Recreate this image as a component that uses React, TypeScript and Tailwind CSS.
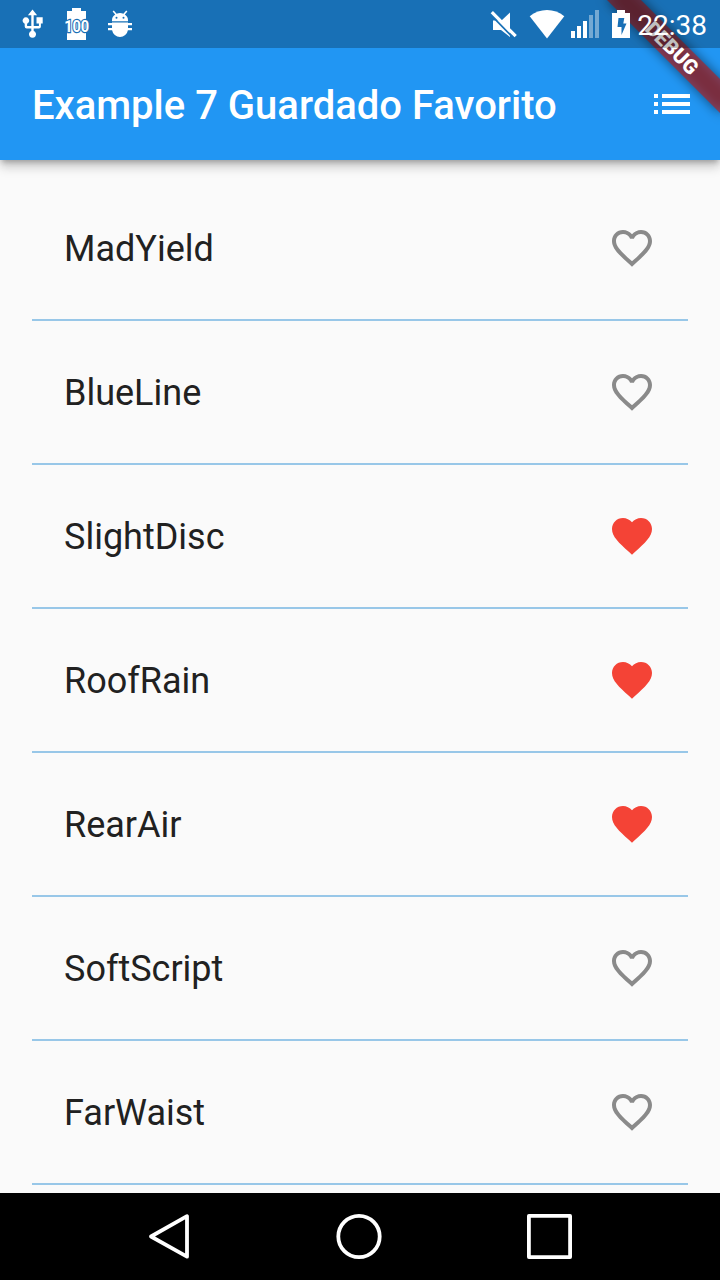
const HEART =
  'M12 21.35l-1.45-1.32C5.4 15.36 2 12.28 2 8.5 2 5.42 4.42 3 7.5 3c1.74 0 3.41.81 4.5 2.09C13.09 3.81 14.76 3 16.5 3 19.58 3 22 5.42 22 8.5c0 3.78-3.4 6.86-8.55 11.54L12 21.35z';
const HEART_OUTLINE =
  'M16.5 3c-1.74 0-3.41.81-4.5 2.09C10.91 3.81 9.24 3 7.5 3 4.42 3 2 5.42 2 8.5c0 3.78 3.4 6.86 8.55 11.54L12 21.35l1.45-1.32C18.6 15.36 22 12.28 22 8.5 22 5.42 19.58 3 16.5 3zm-4.4 15.55l-.1.1-.1-.1C7.14 14.24 4 11.39 4 8.5 4 6.5 5.5 5 7.5 5c1.54 0 3.04.99 3.57 2.36h1.87C13.46 5.99 14.96 5 16.5 5c2 0 3.5 1.5 3.5 3.5 0 2.89-3.14 5.74-7.9 10.05z';

interface Entry {
  name: string;
  saved: boolean;
}

const ENTRIES: Entry[] = [
  { name: 'MadYield', saved: false },
  { name: 'BlueLine', saved: false },
  { name: 'SlightDisc', saved: true },
  { name: 'RoofRain', saved: true },
  { name: 'RearAir', saved: true },
  { name: 'SoftScript', saved: false },
  { name: 'FarWaist', saved: false },
];

function UsbIcon() {
  return (
    <svg className="h-[30px] w-[24px]" viewBox="21 9 24 30" fill="#fff">
      <path d="M32.5 9.5l4.600 5.700h-3.400V26h5.200v-2.600h-2.400v-6.100h6.200v6.100h-1.800v3.200a2 2 0 0 1-2 2h-5.200V31a3.500 3.500 0 1 1-2.400 0v-2.400h-4.600a2 2 0 0 1-2-2v-2.900a3.300 3.300 0 1 1 2.400 0V26h4.200V15.200h-3.400z" />
    </svg>
  );
}

function BatteryLevelIcon() {
  return (
    <svg className="h-[34px] w-[36px] overflow-visible" viewBox="59 7 36 34">
      <path d="M72 8h9v3h5v29H67V11h5z" fill="#fff" />
      <text
        x="76.7"
        y="32.4"
        textAnchor="middle"
        textLength="25"
        lengthAdjust="spacingAndGlyphs"
        fontFamily="Roboto, sans-serif"
        fontWeight="700"
        fontSize="17"
        fill="#fff"
        stroke="#1970b6"
        strokeWidth="2.4"
        paintOrder="stroke"
      >
        100
      </text>
    </svg>
  );
}

function BugIcon() {
  return (
    <svg className="h-[30px] w-[26px]" viewBox="107 9 26 30" fill="#fff">
      <path d="M112 21.200v-1a8 7 0 0 1 3.200-5.700l-2.600-3 1.200-1 2.800 3.300a9 9 0 0 1 6.800 0l2.800-3.300 1.200 1-2.600 3a8 7 0 0 1 3.200 5.700v1z" />
      <path d="M108 23h4v-.6h16v.6h4v2.200h-4v2.800h4v2.200h-4.100a8 8 0 0 1-15.800 0H108V28h4v-2.800h-4z" />
      <circle cx="116.500" cy="17.700" r="1" fill="#1970b6" />
      <circle cx="123.500" cy="17.700" r="1" fill="#1970b6" />
    </svg>
  );
}

function MutedIcon() {
  return (
    <svg className="h-[30px] w-[28px]" viewBox="490 8 28 30">
      <path d="M493 19.500h8.500l8.500-8v24.500l-9-7h-8z" fill="#fff" />
      <path d="M490 13L513.500 37" stroke="#1970b6" strokeWidth="1.8" />
      <path d="M491.800 11.200L515.700 35.200" stroke="#fff" strokeWidth="3.2" />
    </svg>
  );
}

function WifiIcon() {
  return (
    <svg className="h-[30px] w-[36px]" viewBox="529 9 36 30">
      <path d="M529.700 16.200C539.500 8 554.500 8 564.300 16.200L547 38.500z" fill="#fff" />
    </svg>
  );
}

function SignalIcon() {
  return (
    <svg className="h-[30px] w-[30px]" viewBox="570 9 30 30" fill="#fff">
      <path d="M571 31h4v7h-4zM577 26h4v12h-4zM583 21h4v17h-4z" />
      <path d="M589 15h4v23h-4zM595 10h4v28h-4z" opacity=".4" />
    </svg>
  );
}

function ChargingIcon() {
  return (
    <svg className="h-[30px] w-[20px]" viewBox="611 9 20 30">
      <path d="M617 10h8v3h5v25h-18V13h5z" fill="#fff" />
      <path d="M618.500 18h5.800l-1 5.500h3.200l-5 11.500v-8h-4z" fill="#1970b6" />
    </svg>
  );
}

function DebugBanner() {
  return (
    <>
      <div className="absolute top-9 left-[592px] h-6 w-40 rotate-45 bg-black/50 blur-[6px]" />
      <div className="absolute top-9 left-[592px] flex h-6 w-40 rotate-45 items-center justify-center bg-[#b71c1c]/63 font-black text-[20.4px] leading-none text-white">
        DEBUG
      </div>
    </>
  );
}

function StatusBar() {
  return (
    <div className="absolute inset-x-0 top-0 z-20 flex h-12 items-center bg-black/25 pr-[13px] pl-[21px]">
      <UsbIcon />
      <div className="ml-[14px]">
        <BatteryLevelIcon />
      </div>
      <div className="ml-3">
        <BugIcon />
      </div>
      <div className="ml-auto flex items-center">
        <MutedIcon />
        <div className="ml-[11px]">
          <WifiIcon />
        </div>
        <div className="ml-[5px]">
          <SignalIcon />
        </div>
        <div className="ml-[11px]">
          <ChargingIcon />
        </div>
        <span className="ml-1.5 w-[70px] pt-[3px] text-right text-[28px] leading-8 whitespace-nowrap text-white">
          22:38
        </span>
      </div>
    </div>
  );
}

function AppBar() {
  return (
    <header className="relative z-10 h-40 shrink-0 bg-[#2196f3] pt-12 shadow-[0_4px_5px_-2px_rgba(0,0,0,0.2),0_8px_10px_rgba(0,0,0,0.14),0_2px_10px_rgba(0,0,0,0.12)]">
      <div className="flex h-28 items-center justify-between pr-6 pl-8">
        <h1 className="pt-[3px] text-[40px] leading-[48px] font-medium whitespace-nowrap text-white">
          Example 7 Guardado Favorito
        </h1>
        <svg className="h-12 w-12" viewBox="0 0 24 24" fill="#fff">
          <path d="M3 13h2v-2H3v2zm0 4h2v-2H3v2zm0-8h2V7H3v2zm4 4h14v-2H7v2zm0 4h14v-2H7v2zM7 7v2h14V7H7z" />
        </svg>
      </div>
    </header>
  );
}

function Row({ name, saved }: Entry) {
  return (
    <li className="flex h-36 shrink-0 items-center justify-between border-b-2 border-[#98c7e8] px-8">
      <span className="pt-0.5 text-[36px] leading-[42px] text-[#212121]">{name}</span>
      <svg className={saved ? 'h-12 w-12 text-[#f44336]' : 'h-12 w-12 text-[#8a8a8a]'} viewBox="0 0 24 24" fill="currentColor">
        <path d={saved ? HEART : HEART_OUTLINE} />
      </svg>
    </li>
  );
}

function NavigationBar() {
  return (
    <nav className="flex h-[87px] shrink-0 items-center bg-black pl-[148px]">
      <svg className="h-12 w-[42px]" viewBox="0 0 42 48" fill="none" stroke="#fff" strokeWidth="3.8" strokeLinejoin="round">
        <path d="M39 3.200v40.500L3 23.500z" />
      </svg>
      <svg className="ml-[145px] h-12 w-12" viewBox="0 0 48 48" fill="none" stroke="#fff" strokeWidth="3.8">
        <circle cx="24" cy="23.500" r="20.700" />
      </svg>
      <svg className="ml-[142px] h-12 w-12" viewBox="0 0 48 48" fill="none" stroke="#fff" strokeWidth="3.8" strokeLinejoin="round">
        <path d="M3.900 2.900h41.200v41.200H3.900z" />
      </svg>
    </nav>
  );
}

export default function App() {
  return (
    <div className="relative flex h-[1280px] w-[720px] flex-col overflow-hidden bg-[#fafafa] font-['Roboto',sans-serif]">
      <AppBar />
      <ul className="flex min-h-0 flex-1 flex-col overflow-hidden px-8 pt-[17px]">
        {ENTRIES.map((entry) => (
          <Row key={entry.name} {...entry} />
        ))}
      </ul>
      <NavigationBar />
      <div className="pointer-events-none absolute inset-0 z-10 overflow-hidden">
        <DebugBanner />
      </div>
      <StatusBar />
    </div>
  );
}
